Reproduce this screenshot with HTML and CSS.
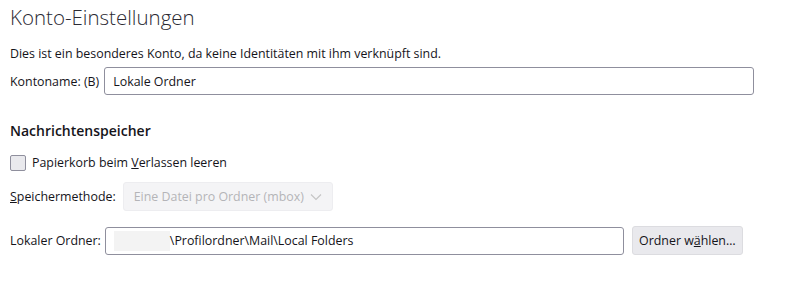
FILE: index.html
```html
<!DOCTYPE html>
<html lang="de">
<head>
<meta charset="utf-8">
<title>Konto-Einstellungen</title>
<link rel="stylesheet" href="styles.css">
</head>
<body>
<main class="page">
  <h1 class="title">Konto-Einstellungen</h1>
  <p class="info">Dies ist ein besonderes Konto, da keine Identitäten mit ihm verknüpft sind.</p>
  <div class="row row-name">
    <label class="label">Kontoname: (B)</label>
    <div class="field field-name">Lokale Ordner</div>
  </div>
  <h2 class="section">Nachrichtenspeicher</h2>
  <div class="row row-check">
    <span class="checkbox"></span>
    <span class="check-label">Papierkorb beim <u>V</u>erlassen leeren</span>
  </div>
  <div class="row row-store">
    <label class="label"><u>S</u>peichermethode:</label>
    <div class="select">
      <span>Eine Datei pro Ordner (mbox)</span>
      <svg class="chev" width="12" height="8" viewBox="0 0 12 8"><path d="M1 1.5 L6 6.5 L11 1.5" fill="none" stroke="#c4c4c4" stroke-width="1.1"/></svg>
    </div>
  </div>
  <div class="row row-local">
    <label class="label">Lokaler Ordner:</label>
    <div class="field field-local"><span class="redact"></span><span>\Profilordner\Mail\Local Folders</span></div>
    <button class="btn">Ordner w<u>ä</u>hlen…</button>
  </div>
</main>
</body>
</html>
```
FILE: styles.css
```css
html, body {
  margin: 0;
  padding: 0;
  background: #ffffff;
}
body {
  font-family: "Open Sans", "Noto Sans", sans-serif;
  font-size: 12.4px;
  color: #15141a;
}
.page {
  padding: 4px 0 0 10px;
  width: 744px;
}
.title {
  margin: 0;
  font-size: 20.5px;
  font-weight: 300;
  line-height: 26px;
  color: #2b2a33;
}
.info {
  margin: 15px 0 0;
  line-height: 18px;
}
.row {
  display: flex;
  align-items: center;
}
.label {
  white-space: nowrap;
}
.row-name {
  margin-top: 4px;
  gap: 5px;
}
.field {
  box-sizing: border-box;
  height: 28px;
  border: 1px solid #8f8f9d;
  border-radius: 3px;
  display: flex;
  align-items: center;
  padding-left: 8px;
  background: #fff;
}
.field-name {
  width: 650px;
}
.section {
  margin: 26px 0 0;
  font-size: 14px;
  font-weight: 600;
  line-height: 20px;
}
.row-check {
  margin-top: 13px;
  gap: 6px;
}
.checkbox {
  box-sizing: border-box;
  width: 16px;
  height: 16px;
  border: 1px solid #8f8f9d;
  border-radius: 2px;
  background: #e9e9ed;
}
.row-store {
  margin-top: 11px;
  gap: 7px;
}
.select {
  box-sizing: border-box;
  width: 210px;
  height: 29px;
  border-radius: 3px;
  background: #f4f4f6;
  border: 1px solid #ededf0;
  color: #b4b4b8;
  display: flex;
  align-items: center;
  gap: 6px;
  padding-left: 10px;
}
.row-local {
  margin-top: 15px;
}
.row-local .label {
  margin-right: 4px;
}
.field-local {
  width: 519px;
  padding-left: 8px;
}
.redact {
  display: inline-block;
  width: 56px;
  height: 20px;
  background: #f3f3f3;
}
.btn {
  box-sizing: border-box;
  margin-left: 8px;
  width: 111px;
  height: 29px;
  font: inherit;
  color: #15141a;
  background: #e9e9ed;
  border: 1px solid #dcdce0;
  border-radius: 3px;
}
```
